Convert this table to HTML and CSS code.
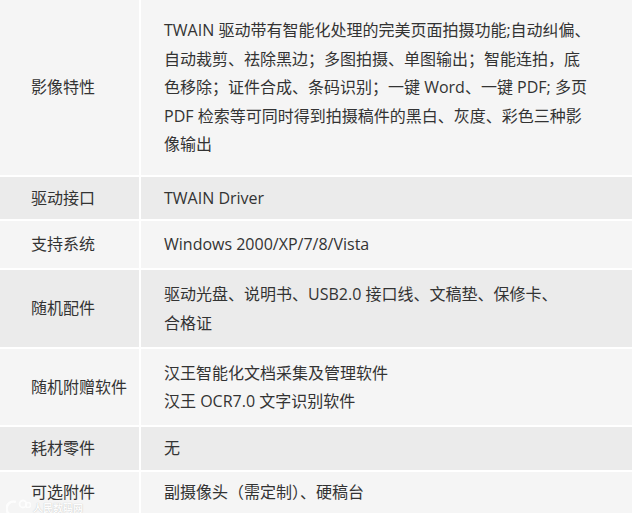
FILE: index.html
```html
<!DOCTYPE html>
<html lang="zh-CN">
<head>
<meta charset="utf-8">
<title>产品参数</title>
<link rel="stylesheet" href="styles.css">
</head>
<body>
<div class="spec">
  <div class="row light h1">
    <div class="key">影像特性</div>
    <div class="val">TWAIN 驱动带有智能化处理的完美页面拍摄功能;自动纠偏、<br>自动裁剪、祛除黑边；多图拍摄、单图输出；智能连拍，底<br>色移除；证件合成、条码识别；一键 Word、一键 PDF; 多页<br>PDF 检索等可同时得到拍摄稿件的黑白、灰度、彩色三种影<br>像输出</div>
  </div>
  <div class="row dark h2">
    <div class="key">驱动接口</div>
    <div class="val">TWAIN Driver</div>
  </div>
  <div class="row light h3">
    <div class="key">支持系统</div>
    <div class="val">Windows 2000/XP/7/8/Vista</div>
  </div>
  <div class="row dark h4">
    <div class="key">随机配件</div>
    <div class="val">驱动光盘、说明书、USB2.0 接口线、文稿垫、保修卡、<br>合格证</div>
  </div>
  <div class="row light h5">
    <div class="key">随机附赠软件</div>
    <div class="val">汉王智能化文档采集及管理软件<br>汉王 OCR7.0 文字识别软件</div>
  </div>
  <div class="row dark h6">
    <div class="key">耗材零件</div>
    <div class="val">无</div>
  </div>
  <div class="row light h7">
    <div class="key">可选附件</div>
    <div class="val">副摄像头（需定制）、硬稿台</div>
  </div>
  <div class="watermark">
    <svg class="wm-logo" width="26" height="20" viewBox="0 0 26 20">
      <path d="M10 4 A7 7 0 1 0 12 16" fill="none" stroke="#fff" stroke-width="2.5"/>
      <circle cx="17" cy="6" r="3.5" fill="none" stroke="#fff" stroke-width="1.8"/>
      <circle cx="22" cy="7" r="2.5" fill="none" stroke="#fff" stroke-width="1.4"/>
    </svg>
    <span class="wm-text">人民数码网</span>
  </div>
</div>
</body>
</html>
```

FILE: styles.css
```css
html, body {
  margin: 0;
  padding: 0;
  background: #ffffff;
}

body {
  font-family: "Open Sans", "Noto Sans CJK SC", sans-serif;
  font-size: 16px;
  color: #333333;
}

.spec {
  position: relative;
  width: 632px;
  display: flex;
  flex-direction: column;
  gap: 2px;
}

.row {
  display: grid;
  grid-template-columns: 139px 1fr;
  column-gap: 2px;
}

.key,
.val {
  display: flex;
  flex-direction: column;
  justify-content: center;
  align-items: flex-start;
  line-height: 28.5px;
}

.key {
  padding-left: 31px;
}

.val {
  padding-left: 23px;
}

.light .key,
.light .val {
  background: #f5f5f5;
}

.dark .key,
.dark .val {
  background: #ebebeb;
}

.h1 { height: 175px; }
.h2 { height: 42px; }
.h3 { height: 47px; }
.h4 { height: 77px; }
.h5 { height: 76px; }
.h6 { height: 43px; }
.h7 { height: 41px; }

.watermark {
  position: absolute;
  left: 6px;
  top: 498px;
  display: flex;
  align-items: center;
  gap: 1px;
  opacity: 0.8;
}

.wm-text {
  font-size: 10px;
  line-height: 12px;
  color: #ffffff;
  font-family: "Noto Sans CJK SC", sans-serif;
  font-weight: 700;
  text-shadow: 0 0 1px #aaa;
}
```
